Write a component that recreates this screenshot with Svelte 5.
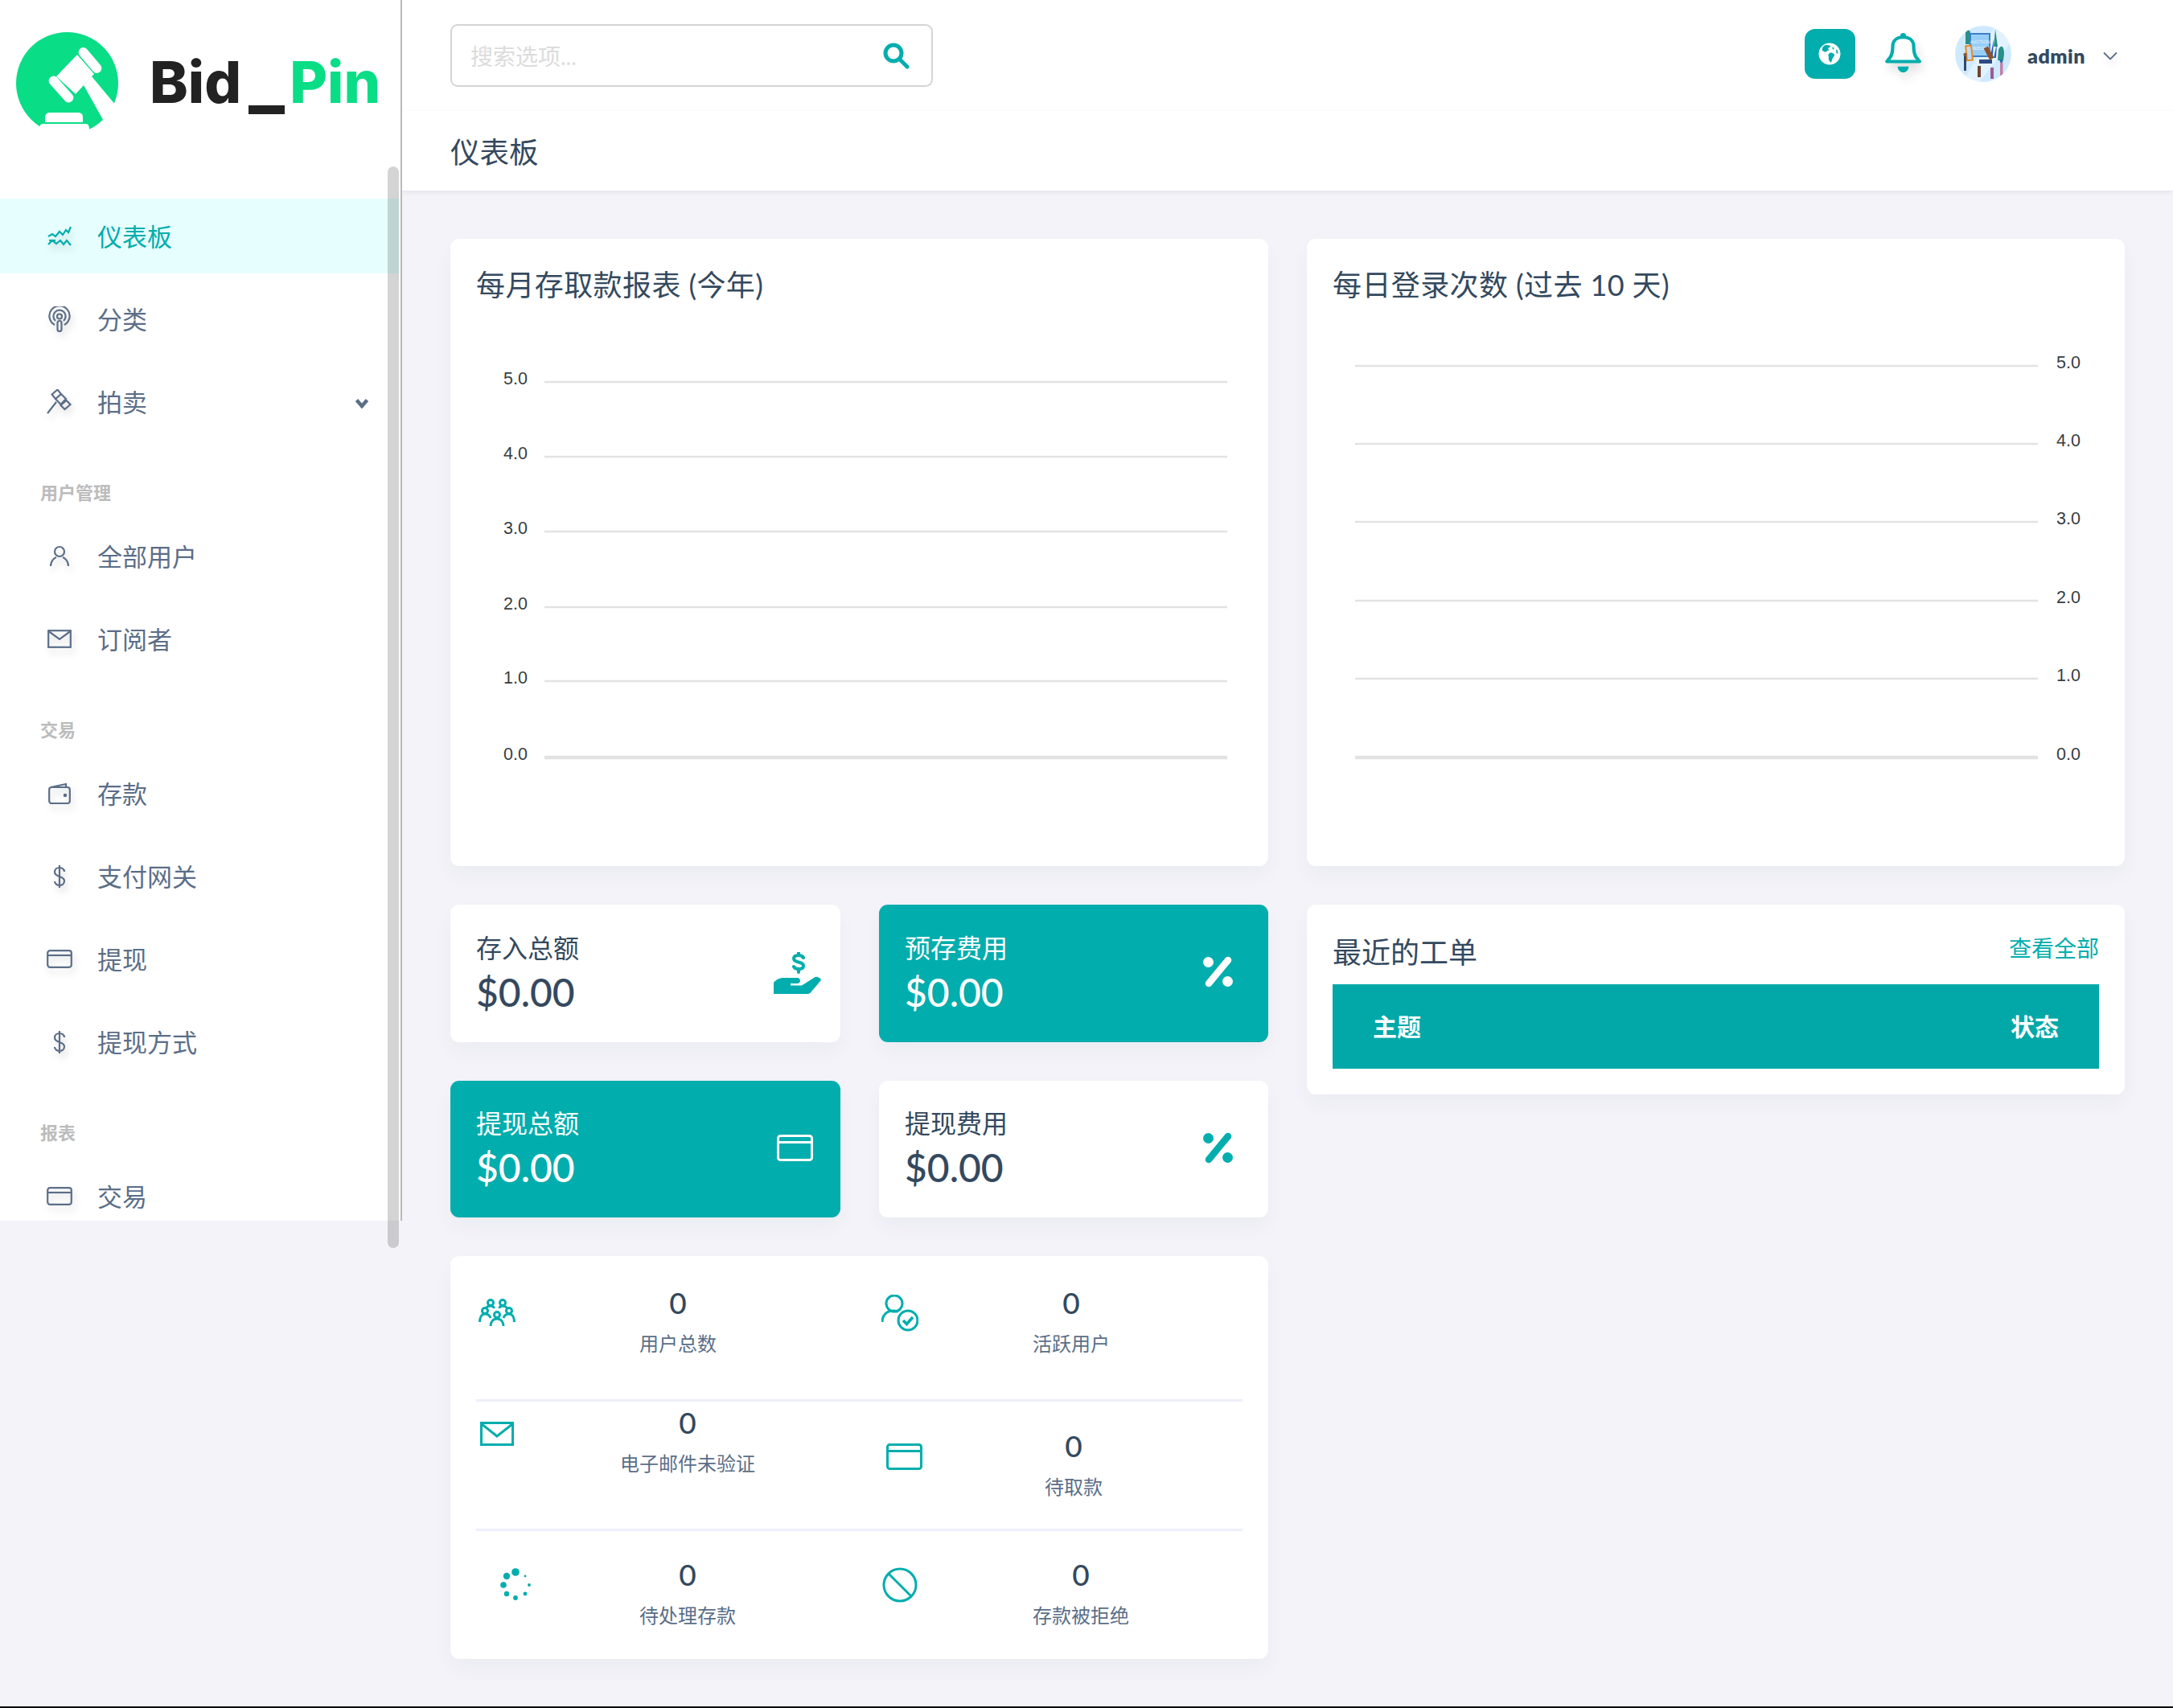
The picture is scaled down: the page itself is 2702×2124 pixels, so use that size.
<script>
  const sections = [
    { items: [
      { icon: 'wave', text: '仪表板', active: true },
      { icon: 'pod', text: '分类' },
      { icon: 'gavel', text: '拍卖', caret: true }
    ] },
    { label: '用户管理', items: [
      { icon: 'user', text: '全部用户' },
      { icon: 'mail', text: '订阅者' }
    ] },
    { label: '交易', items: [
      { icon: 'wallet', text: '存款' },
      { icon: 'dollar', text: '支付网关' },
      { icon: 'card', text: '提现' },
      { icon: 'dollar', text: '提现方式' }
    ] },
    { label: '报表', items: [
      { icon: 'card', text: '交易' }
    ] }
  ];
  const ticks = ['5.0', '4.0', '3.0', '2.0', '1.0', '0.0'];
  const leftY = [96, 189, 282, 376, 468, 563];
  const rightY = [76, 173, 270, 368, 465, 563];
  const dots = [
    [20, 5, 4.8], [9, 10, 4.2], [5, 21, 3.8], [9, 32, 3.2], [20, 37, 2.9], [32, 32, 2.4], [37, 21, 1.9], [32, 10, 1.4]
  ];
</script>

{#snippet navIcon(name)}
  {#if name === 'wave'}
    <svg class="ni" width="30" height="26" viewBox="0 0 30 26"><path d="M1 13l5-3 4 3 5-6 4 4 4-6 3 3 3-7M1 23l5-5 5 4 5-4 4 5 4-5 5 6" /><path d="M2 18h8" /></svg>
  {:else if name === 'pod'}
    <svg class="ni" width="30" height="32" viewBox="0 0 30 32"><path d="M9 23a12.6 12.6 0 1 1 12 0" /><path d="M10 18a7.6 7.6 0 1 1 10 0" /><circle cx="15" cy="12.5" r="3" /><rect x="12.5" y="18" width="5" height="13" rx="2.5" /></svg>
  {:else if name === 'gavel'}
    <svg class="ni" width="32" height="32" viewBox="0 0 32 32"><path d="M6.5 6.500L13.500.5 18 6l-7 6zM11 12l7-6 6 6-6.500 7zM17.500 20l7-6 5 5-7 6zM12 16L1 30" /></svg>
  {:else if name === 'user'}
    <svg class="ni" width="24" height="27" viewBox="0 0 24 27"><circle cx="12" cy="8" r="6" /><path d="M1 26c0-6 4-10 7-11M23 26c0-6-4-10-7-11" /></svg>
  {:else if name === 'mail'}
    <svg class="ni" width="30" height="23" viewBox="0 0 30 23"><rect x="1.2" y="1.2" width="27.6" height="20.6" /><path d="M1.5 2L15 12 28.5 2" /></svg>
  {:else if name === 'wallet'}
    <svg class="ni" width="28" height="28" viewBox="0 0 28 28"><rect x="1.2" y="6" width="25.6" height="20" rx="3" /><path d="M3 6L22 2v4" /><circle cx="21" cy="16" r="1.2" /></svg>
  {:else if name === 'dollar'}
    <svg class="ni" width="16" height="30" viewBox="0 0 16 30"><path d="M14 9c0-3-3-5-6-5s-6 2-6 5.500S5 14 8 15s6 2 6 5.500S11 26 8 26s-6-2-6-5M8 1v28" /></svg>
  {:else if name === 'card'}
    <svg class="ni" width="32" height="23" viewBox="0 0 32 23"><rect x="1.2" y="1.2" width="29.6" height="20.6" rx="3" /><path d="M1.500 7h29" /></svg>
  {/if}
{/snippet}

{#snippet percent()}
  <svg width="39" height="39" viewBox="0 0 39 39" class="pct"><circle cx="7.500" cy="7.500" r="6.500" /><circle cx="31.500" cy="31.500" r="6.500" /><path d="M32 5L8 34" /></svg>
{/snippet}

<div class="page">
  <aside class="side">
    <div class="logo">
      <svg class="mark" width="134" height="122" viewBox="0 0 134 122">
        <circle cx="63.500" cy="63.500" r="63.500" fill="#09dd86" />
        <g fill="#fff">
          <rect x="86" y="16" width="12" height="38" rx="6" transform="rotate(-40 92 35)" />
          <rect x="50" y="51" width="12" height="40" rx="6" transform="rotate(-42 56 71)" />
          <path d="M76 28l21 24-23 25-24-22z" />
          <path d="M84 66l10-11 40 48-18 20z" />
          <path d="M36 106c0-4 3-6 6-6h35c4 0 6 2 6 6v6H36z" />
          <path d="M33 114h54c3 0 4 3 4 8H29c0-5 1-8 4-8z" />
        </g>
      </svg>
      <span class="word"><span class="dark">Bid</span><span class="bar"></span><span class="green">Pin</span></span>
    </div>

    {#each sections as sec}
      {#if sec.label}<div class="sec">{sec.label}</div>{/if}
      {#each sec.items as it}
        <div class="item" class:active={it.active}>
          <span class="ibox">{@render navIcon(it.icon)}</span>
          <span class="itext">{it.text}</span>
          {#if it.caret}
            <svg class="caret" width="18" height="13" viewBox="0 0 18 13"><path d="M2.500 2.500l6.500 7.500 6.500-7.500" /></svg>
          {/if}
        </div>
      {/each}
    {/each}
    <div class="thumb"></div>
  </aside>

  <main class="main">
    <header class="head">
      <div class="top">
        <div class="search">
          <input class="sinput" placeholder="搜索选项..." />
          <svg width="34" height="34" viewBox="0 0 34 34" class="sicon"><circle cx="14" cy="14" r="10" /><path d="M21.500 21.500L31 31" /></svg>
        </div>
        <div class="tools">
          <span class="globe">
            <svg width="28" height="28" viewBox="0 0 28 28">
              <circle cx="14" cy="14" r="13.500" fill="#fff" />
              <path d="M9 3c2 0 5 0 6 1 0 2-2 2-3 3l1 2c-1 2-3 1-4 3L5 10C4 7 6 4 9 3zM14 13c2-1 5 0 6 2 0 3-3 4-3 7l-1.500 3C14 23 12 21 13 18c-1-2-1-3 1-5zM22 8l2 2 .5 4-2-1zM17 6l3 .5-1.500 2.500z" fill="#02adad" />
            </svg>
          </span>
          <svg class="bell" width="45" height="50" viewBox="0 0 43 48">
            <circle cx="21.500" cy="4.500" r="3.500" fill="#02adad" />
            <path d="M6 30c2-3 3-7 3-13 0-7 5-11 12.500-11S34 10 34 17c0 6 1 10 3 13l4 5H2z" fill="#fff" stroke="#02adad" stroke-width="4" stroke-linejoin="round" />
            <path d="M15 41h13c0 4-3 7-6.500 7S15 45 15 41z" fill="#02adad" />
          </svg>
          <svg class="avatar" width="70" height="70" viewBox="0 0 70 70">
            <defs><clipPath id="av"><circle cx="35" cy="35" r="35" /></clipPath></defs>
            <g clip-path="url(#av)">
              <rect width="70" height="70" fill="#cfeaff" />
              <path d="M10 70L50 0h20v20L30 70z" fill="#e2f3ff" />
              <path d="M13 8c2-4 6-3 6 1v14h-6z" fill="#2a8f88" />
              <path d="M50 4l3 22h-5zM54 30c3-7 7-5 7 5l-1 8h-7z" fill="#2a8f88" />
              <rect x="18" y="9" width="26" height="30" fill="#3f7fc8" />
              <rect x="20" y="11" width="22" height="26" fill="#97cef6" />
              <text x="31" y="22" class="avt">AUCTION</text>
              <text x="31" y="30" class="avt">WEBSITE</text>
              <rect x="13" y="24" width="9" height="20" fill="#e98a1e" transform="rotate(-6 17 34)" />
              <rect x="15" y="26" width="5" height="16" fill="#bcdcf5" transform="rotate(-6 17 34)" />
              <path d="M48 17l-4 20 3 0zM52 22l-4 18 3 0z" fill="#2a5fb8" />
              <rect x="39" y="26" width="6" height="16" fill="#8a5230" transform="rotate(-28 42 34)" />
              <rect x="28" y="50" width="4" height="14" fill="#6e4630" />
              <rect x="11" y="38" width="3" height="18" fill="#33486e" />
              <circle cx="12.500" cy="36" r="2.200" fill="#7a5a48" />
              <rect x="44" y="52" width="4" height="14" fill="#9a5a98" />
              <rect x="56" y="46" width="3.500" height="16" fill="#c080a8" />
              <rect x="30" y="42" width="16" height="5" fill="#2f4a80" />
              <circle cx="57.500" cy="44" r="2" fill="#2a66b0" />
            </g>
          </svg>
          <span class="admin">admin</span>
          <svg class="chev" width="18" height="11" viewBox="0 0 18 11"><path d="M1 1.500l8 8 8-8" /></svg>
        </div>
      </div>
      <div class="pagetitle">仪表板</div>
    </header>

    <div class="content">
      <div class="col">
        <section class="card chart">
          <h3 class="ctitle">每月存取款报表 (今年)</h3>
          <svg class="plot" width="953" height="650" viewBox="0 0 953 650">
            {#each ticks as t, i}
              <line x1="85" x2="934" y1={leftY[i]} y2={leftY[i]} class:zero={i === 5} />
              <text x="34" y={leftY[i] + 3}>{t}</text>
            {/each}
          </svg>
        </section>

        <div class="stats">
          <div class="card stat">
            <div><div class="slabel">存入总额</div><div class="sval">$0.00</div></div>
            <svg class="hand" width="59" height="52" viewBox="0 0 59 52">
              <path d="M31 0v3M31 22v3M37 7c-1-2-3-3-6-3-3 0-6 1-6 4 0 6 12 3 12 9 0 3-3 4-6 4-3 0-5-1-6-3" fill="none" stroke="#02adad" stroke-width="4" stroke-linecap="round" />
              <path d="M0 52V38c3-4 8-6 12-6h17c3 0 4 2 4 3.500S32 39 29 39h-8v2.500h14L50 32c3-2 5-1 7 0 1.500 1 2 2 1.500 3.500L47 49c-1 2-3 3-5 3z" fill="#02adad" />
            </svg>
          </div>
          <div class="card stat teal">
            <div><div class="slabel">预存费用</div><div class="sval">$0.00</div></div>
            <span class="pw">{@render percent()}</span>
          </div>
          <div class="card stat teal">
            <div><div class="slabel">提现总额</div><div class="sval">$0.00</div></div>
            <svg class="cw" width="45" height="33" viewBox="0 0 45 33"><rect x="1.500" y="1.500" width="42" height="30" rx="3" /><path d="M2 9.500h41" /></svg>
          </div>
          <div class="card stat">
            <div><div class="slabel">提现费用</div><div class="sval">$0.00</div></div>
            <span class="pw">{@render percent()}</span>
          </div>
        </div>

        <section class="card widget">
          <div class="wrow r1">
            <div class="cell c1">
              <svg class="wi" width="46" height="35" viewBox="0 0 46 35">
                <g class="thin"><circle cx="15" cy="5" r="3.500" /><circle cx="30" cy="5" r="3.500" /><circle cx="8" cy="15" r="3.500" /><circle cx="23" cy="20" r="3.500" /><circle cx="38" cy="15" r="3.500" />
                <path d="M1.500 29c0-5 2-10 6.500-10s6 2 7 5M44.500 29c0-5-2-10-6.500-10s-6 2-7 5M15 34c0-5 3-9 8-9s8 4 8 9M10 12c0-2 2-3 5-3s4 1 4.500 3M26 12c0-2 2-3 4-3s5 1 5 3" /></g>
              </svg>
              <div class="wt"><div class="wn">0</div><div class="wl">用户总数</div></div>
            </div>
            <div class="cell c2">
              <svg class="wi" width="46" height="46" viewBox="0 0 46 46">
                <circle cx="16" cy="11" r="10" /><path d="M1 34c0-9 6-14 14-14 2 0 4 .5 6 1" />
                <circle cx="33" cy="32" r="12" /><path class="thick" d="M27 32l4.500 4.500L39 28" />
              </svg>
              <div class="wt"><div class="wn">0</div><div class="wl">活跃用户</div></div>
            </div>
          </div>
          <div class="wrow r2">
            <div class="cell c3">
              <svg class="wi" width="42" height="30" viewBox="0 0 42 30"><rect x="1.500" y="1.500" width="39" height="27" /><path d="M2 3l19 15L40 3" /></svg>
              <div class="wt"><div class="wn">0</div><div class="wl">电子邮件未验证</div></div>
            </div>
            <div class="cell c4">
              <svg class="wi" width="45" height="33" viewBox="0 0 45 33"><rect x="1.500" y="1.500" width="42" height="30" rx="3" /><path d="M2 9.500h41" /></svg>
              <div class="wt"><div class="wn">0</div><div class="wl">待取款</div></div>
            </div>
          </div>
          <div class="wrow r3">
            <div class="cell c5">
              <svg class="wi dots" width="42" height="42" viewBox="0 0 42 42">
                {#each dots as d}<circle cx={d[0]} cy={d[1]} r={d[2]} />{/each}
              </svg>
              <div class="wt"><div class="wn">0</div><div class="wl">待处理存款</div></div>
            </div>
            <div class="cell c6">
              <svg class="wi" width="44" height="44" viewBox="0 0 44 44"><circle cx="22" cy="22" r="20" /><path d="M8 8l28 28" /></svg>
              <div class="wt"><div class="wn">0</div><div class="wl">存款被拒绝</div></div>
            </div>
          </div>
        </section>
      </div>

      <div class="col">
        <section class="card chart">
          <h3 class="ctitle">每日登录次数 (过去 10 天)</h3>
          <svg class="plot" width="953" height="650" viewBox="0 0 953 650">
            {#each ticks as t, i}
              <line x1="28" x2="877" y1={rightY[i]} y2={rightY[i]} class:zero={i === 5} />
              <text x="900" y={rightY[i] + 3}>{t}</text>
            {/each}
          </svg>
        </section>

        <section class="card tickets">
          <div class="thead">
            <h3 class="ctitle tt">最近的工单</h3>
            <span class="viewall">查看全部</span>
          </div>
          <div class="tbar"><span>主题</span><span>状态</span></div>
        </section>
      </div>
    </div>
  </main>
</div>

<style>
  :global(html), :global(body) { margin: 0; background: #000; }
  .page {
    display: flex;
    width: 2702px;
    height: 2122px;
    background: #f3f3f9;
    font-family: Lato, "Noto Sans CJK SC", sans-serif;
    color: #34495e;
    overflow: hidden;
  }
  .side {
    position: relative;
    flex: none;
    width: 500px;
    height: 1518px;
    box-sizing: border-box;
    background: #fff;
    border-right: 2px solid #b8b8b8;
    overflow: visible;
  }
  .logo {
    display: flex;
    align-items: flex-start;
    height: 247px;
    box-sizing: border-box;
    padding: 40px 0 0 20px;
  }
  .mark { flex: none; }
  .word {
    display: flex;
    align-items: flex-start;
    margin: 22px 0 0 32px;
    font-family: Inter, sans-serif;
    font-weight: 800;
    font-size: 72px;
    line-height: 80px;
  }
  .dark { color: #222; }
  .green { color: #09dd86; }
  .bar { width: 45px; height: 11px; background: #222; margin: 69px 6px 0 9px; }
  .item {
    display: flex;
    align-items: center;
    height: 93px;
    margin: 0 2px 10px 0;
    color: #5b6e88;
    font-size: 31px;
    overflow: hidden;
  }
  .item.active { background: #e6fefe; color: #02adad; }
  .ibox {
    flex: none;
    display: flex;
    justify-content: center;
    width: 52px;
    margin-left: 48px;
  }
  .itext { margin: 0 0 3px 21px; }
  .ni {
    fill: none;
    stroke: currentColor;
    stroke-width: 2.2;
    filter: drop-shadow(3px 6px 4px rgba(0, 0, 0, 0.14));
  }
  .caret {
    margin: 3px 37px 0 auto;
    fill: none;
    stroke: #5b6e88;
    stroke-width: 4.500;
  }
  .sec {
    box-sizing: border-box;
    height: 89px;
    padding: 42px 0 0 50px;
    font-size: 22px;
    line-height: 30px;
    font-weight: 700;
    color: #bcbcbc;
  }
  .thumb {
    position: absolute;
    left: 482px;
    top: 207px;
    width: 14px;
    height: 1345px;
    border-radius: 7px;
    background: rgba(0, 0, 0, 0.17);
  }
  .main { flex: 1; min-width: 0; }
  .head {
    background: #fff;
    height: 237px;
    box-shadow: 0 2px 6px rgba(18, 38, 63, 0.07);
  }
  .top {
    display: flex;
    align-items: center;
    height: 138px;
    box-sizing: border-box;
    padding: 0 69px 0 60px;
    border-bottom: 1px solid #fafafa;
  }
  .search {
    display: flex;
    align-items: center;
    width: 600px;
    height: 78px;
    box-sizing: border-box;
    border: 2.5px solid #d4d4d4;
    border-radius: 9px;
    padding: 0 27px 0 23px;
  }
  .sinput {
    flex: 1;
    min-width: 0;
    border: 0;
    outline: 0;
    padding: 2px 0 0;
    background: none;
    font: 28px Lato, "Noto Sans CJK SC", sans-serif;
  }
  .sinput::placeholder { color: #dcdcdc; opacity: 1; }
  .sicon { flex: none; fill: none; stroke: #02adad; stroke-width: 5; stroke-linecap: round; }
  .tools {
    display: flex;
    align-items: center;
    margin-left: auto;
    padding-bottom: 4px;
  }
  .globe {
    display: flex;
    align-items: center;
    justify-content: center;
    width: 63px;
    height: 62px;
    border-radius: 13px;
    background: #02adad;
    margin-right: 37px;
  }
  .bell {
    margin-right: 42px;
    margin-bottom: 4px;
    filter: drop-shadow(3px 8px 6px rgba(0, 0, 0, 0.12));
  }
  .avatar { margin-right: 20px; }
  .avt { font: 5.500px "Liberation Sans", sans-serif; fill: #e8f5ff; text-anchor: middle; }
  .admin { font-size: 25px; font-weight: 800; line-height: 30px; margin: 4px 22px 0 0; letter-spacing: 0.5px; }
  .chev {
    margin-top: 6px;
    fill: none;
    stroke: #5b6e88;
    stroke-width: 1.800;
    filter: drop-shadow(2px 5px 4px rgba(0, 0, 0, 0.12));
  }
  .pagetitle {
    padding-left: 60px;
    font-size: 36.500px;
    line-height: 72px;
    margin-top: 15px;
  }
  .content {
    display: grid;
    grid-template-columns: 1017px 1017px;
    gap: 48px;
    padding: 60px 60px 0;
    align-items: start;
  }
  .col { display: flex; flex-direction: column; gap: 48px; }
  .card {
    background: #fff;
    border-radius: 11px;
    box-shadow: 0 12px 26px rgba(18, 38, 63, 0.035);
  }
  .chart { height: 780px; box-sizing: border-box; padding: 32px; }
  .ctitle { margin: 0; font-size: 36px; font-weight: 400; line-height: 50px; letter-spacing: 0.4px; color: #34495e; }
  .tt { margin-top: 2px; letter-spacing: 0; }
  .plot { display: block; overflow: visible; }
  .plot line { stroke: #e2e2e2; stroke-width: 2.500; }
  .plot line.zero { stroke-width: 4.500; }
  .plot text { font: 21.500px "Liberation Sans", sans-serif; fill: #373d3f; }
  .stats {
    display: grid;
    grid-template-columns: 485px 484px;
    grid-auto-rows: 170.500px;
    gap: 48px;
  }
  .stat {
    display: flex;
    align-items: center;
    justify-content: space-between;
    padding: 0 0 0 32px;
    position: relative;
  }
  .slabel { font-size: 32px; line-height: 40px; }
  .sval { font-size: 48px; line-height: 56px; margin-top: 7px; color: #34495e; font-weight: 500; }
  .teal { background: #02adad; color: #fff; }
  .teal .sval { color: #fff; }
  .hand { margin-right: 24px; }
  .pw { display: flex; margin: 0 43px 3px 0; }
  .pct { fill: #02adad; stroke: #02adad; }
  .pct path { stroke-width: 8.500; stroke-linecap: round; }
  .pct circle { stroke: none; }
  .teal .pct { fill: #fff; stroke: #fff; }
  .cw { margin: 0 34px 3px 0; fill: none; stroke: #fff; stroke-width: 3; }
  .widget { padding: 0 32px; height: 501px; box-sizing: border-box; }
  .wrow { display: grid; grid-template-columns: 500px 1fr; box-sizing: border-box; }
  .r1 { height: 181px; border-bottom: 3px solid #edf0fb; }
  .r2 { height: 161px; border-bottom: 3px solid #edf0fb; }
  .cell { display: grid; align-items: start; }
  .wi { fill: none; stroke: #02adad; stroke-width: 3; display: block; }
  .wi .thin { stroke-width: 3; }
  .wi .thick { stroke-width: 3.600; }
  .dots { stroke: none; fill: #02adad; }
  .wt { display: flex; flex-direction: column; align-items: center; width: 240px; }
  .wn { font-size: 37px; line-height: 50px; color: #34495e; font-weight: 500; }
  .wl { font-size: 24px; line-height: 36px; margin-top: 8px; color: #5b6e88; white-space: nowrap; }
  .c1 { grid-template-columns: 131px 240px; }
  .c1 .wi { margin: 53px 0 0 3px; }
  .c1 .wt { padding-top: 33px; }
  .c2 { grid-template-columns: 120px 240px; }
  .c2 .wi { margin: 48px 0 0 4px; }
  .c2 .wt { padding-top: 33px; }
  .c3 { grid-template-columns: 143px 240px; }
  .c3 .wi { margin: 25px 0 0 5px; }
  .c3 .wt { padding-top: 1px; }
  .c4 { grid-template-columns: 123px 240px; }
  .c4 .wi { margin: 52px 0 0 10px; }
  .c4 .wt { padding-top: 30px; }
  .c5 { grid-template-columns: 143px 240px; }
  .c5 .wi { margin: 46px 0 0 29px; }
  .c5 .wt { padding-top: 29px; }
  .c6 { grid-template-columns: 132px 240px; }
  .c6 .wi { margin: 45px 0 0 5px; }
  .c6 .wt { padding-top: 29px; }
  .tickets { padding: 32px; height: 236px; box-sizing: border-box; }
  .thead { display: flex; justify-content: space-between; align-items: flex-start; height: 67px; }
  .viewall { font-size: 28px; line-height: 44px; color: #02adad; }
  .tbar {
    display: flex;
    align-items: center;
    justify-content: space-between;
    height: 105px;
    box-sizing: border-box;
    padding: 0 50px 3px;
    background: #02a8a8;
    color: #fff;
    font-size: 30px;
    font-weight: 700;
  }
</style>
